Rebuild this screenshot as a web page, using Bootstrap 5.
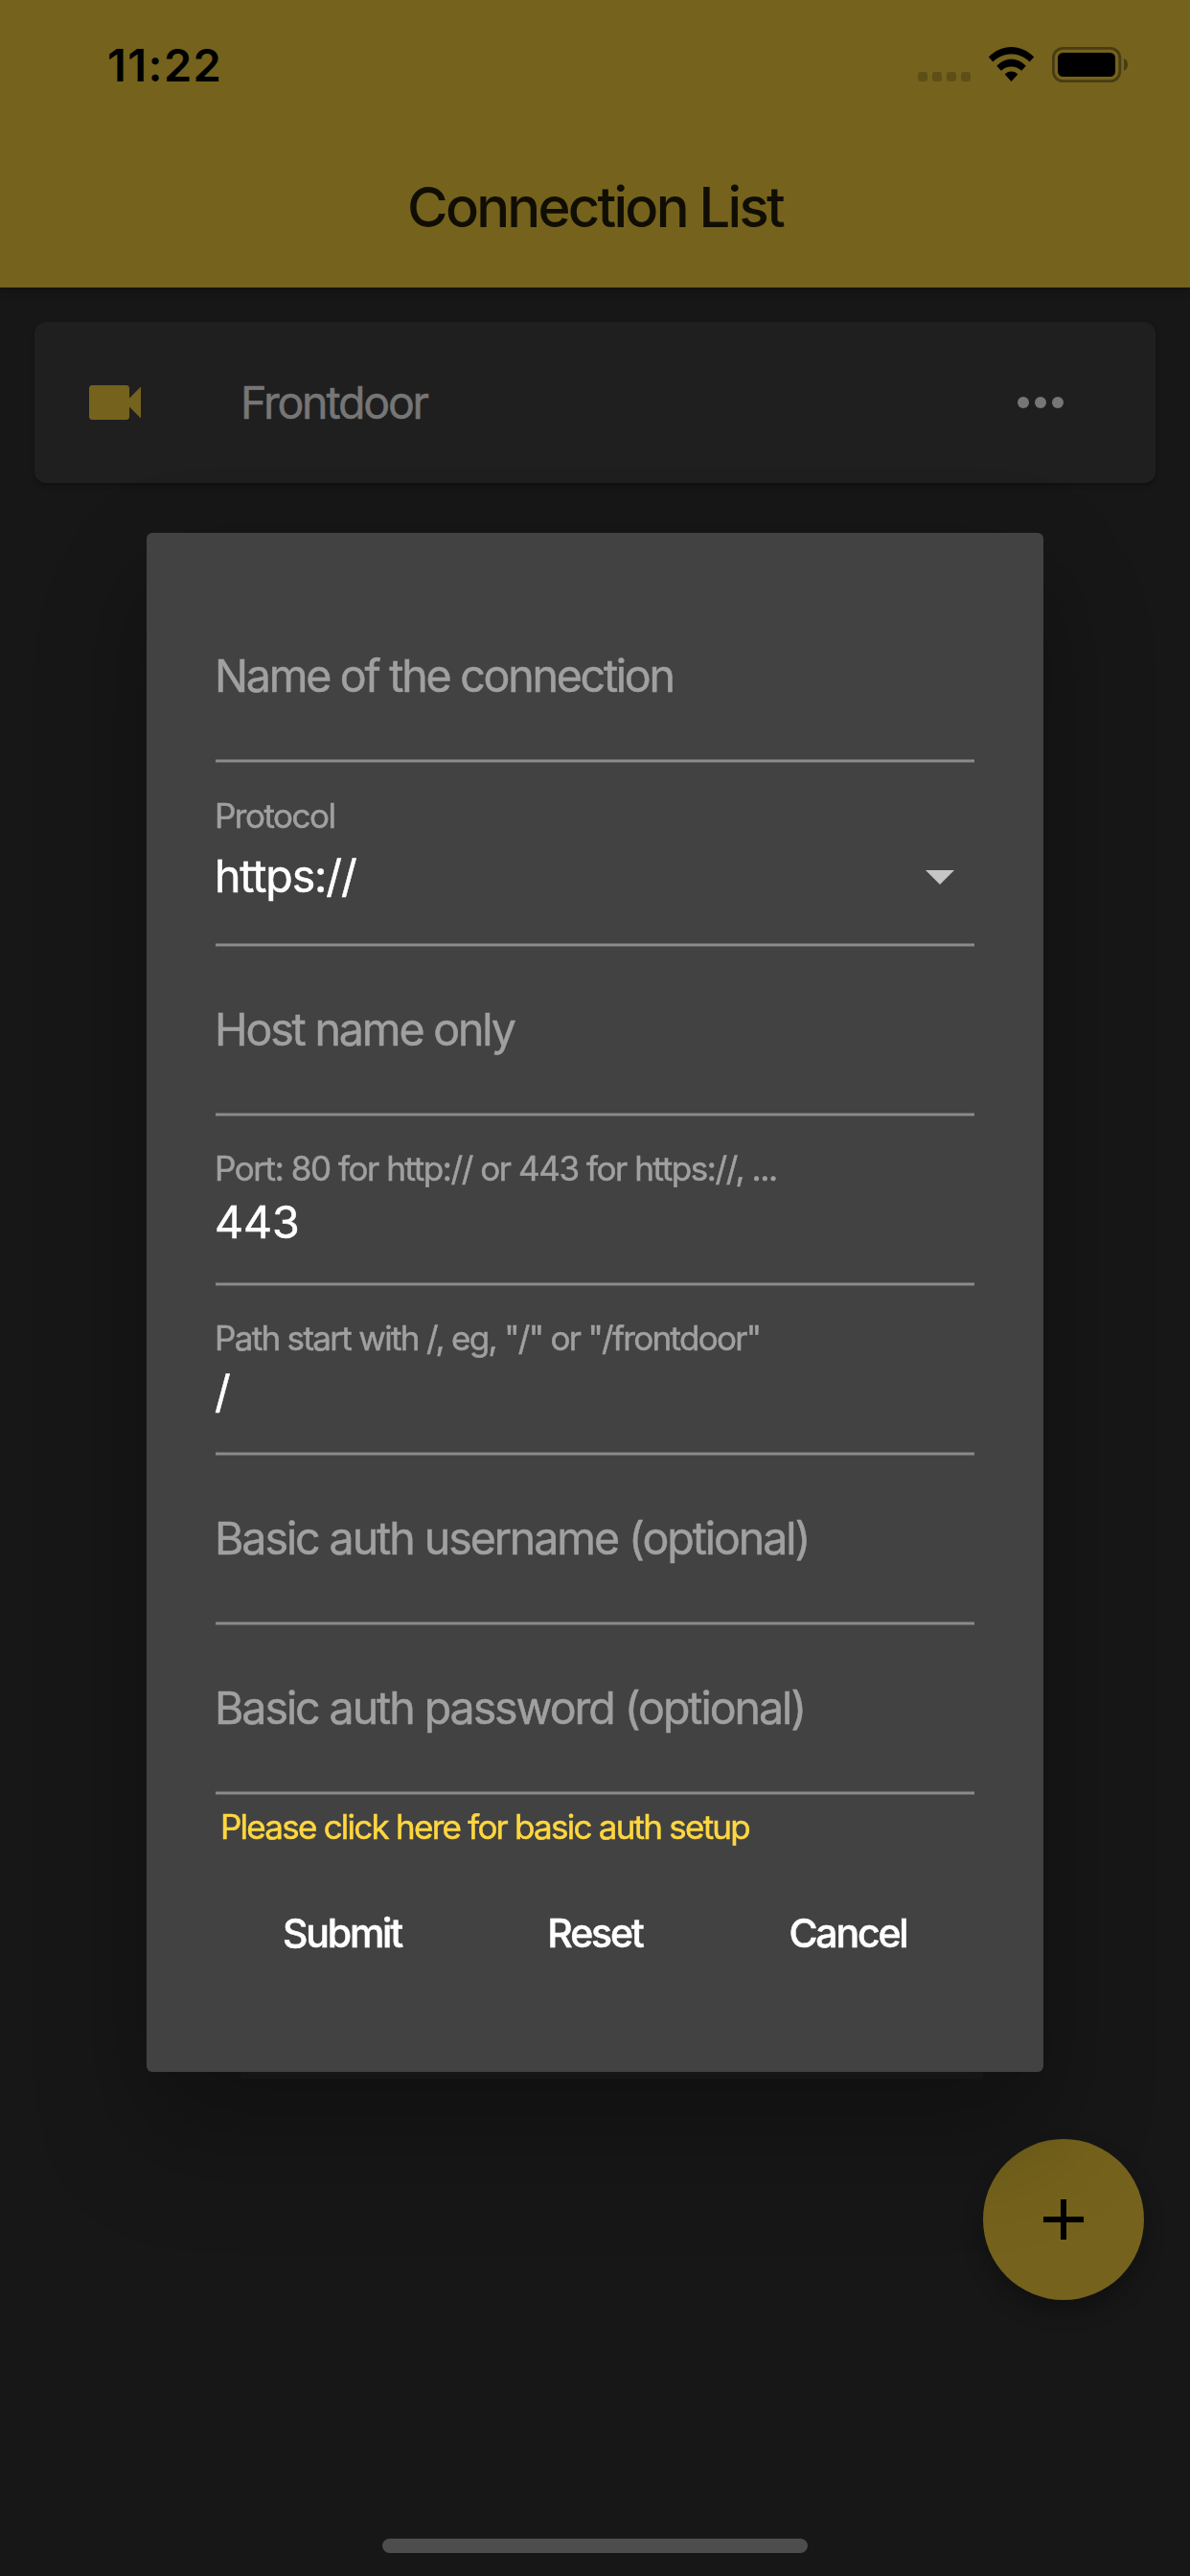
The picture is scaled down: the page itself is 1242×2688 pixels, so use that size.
<!DOCTYPE html>
<html lang="en">
<head>
    <meta charset="UTF-8">
    <meta name="viewport" content="width=device-width, initial-scale=1.0">
    <title>Connection List</title>
    <!-- Bootstrap CSS -->
    <link href="https://cdn.jsdelivr.net/npm/bootstrap@5.3.0/dist/css/bootstrap.min.css" rel="stylesheet">
    <style>
        body {
            background: #171717;
            color: #fff;
            font-family: Inter, "Liberation Sans", sans-serif;
            height: 2688px;
            overflow: hidden;
        }
        svg {
            display: block;
            flex: none;
        }

        /* App bar */
        .app-bar {
            background: #75621c;
            height: 300px;
            box-shadow: 0 3px 10px rgba(0, 0, 0, 0.25);
        }
        .status-bar {
            height: 132px;
            padding: 3px 65px 0 112px;
            color: #000;
        }
        .clock {
            font-size: 47px;
            font-weight: 600;
            line-height: 60px;
            letter-spacing: 1.4px;
        }
        .app-title {
            height: 168px;
            color: #100e04;
            font-size: 58px;
            font-weight: 500;
            letter-spacing: -2.75px;
        }

        /* Connection list */
        .connection {
            height: 168px;
            margin: 36px 36px 0;
            padding: 0 84px 0 48px;
            background: #1f1f1f;
            border-radius: 12px;
            box-shadow: 0 3px 5px rgba(0, 0, 0, 0.3);
        }
        .connection-name {
            margin-left: 95px;
            padding-top: 2px;
            color: #767676;
            font-size: 46.5px;
            letter-spacing: -2.2px;
            -webkit-text-stroke: 0.5px;
        }

        /* Dialog */
        .dialog-box {
            width: 936px;
            margin: 556px auto 0;
        }
        .dialog-sheet {
            height: 1606px;
            padding: 63px 72px 0;
            background: #424242;
            border-radius: 6px;
            box-shadow: 0 72px 114px 9px rgba(0, 0, 0, 0.18), 0 27px 100px 8px rgba(0, 0, 0, 0.12);
        }
        .dialog-edge {
            width: 775px;
            height: 7px;
            margin-left: 98px;
            background: #161616;
            position: relative;
        }
        .field {
            height: 177px;
            background: linear-gradient(#666 1px, #8b8b8b 1px 3px, #666 3px) bottom / 100% 4px no-repeat;
            white-space: nowrap;
            -webkit-text-stroke: 0.5px;
        }
        .field-select { height: 192px; }
        .field-empty { padding-top: 56px; }
        .field-filled { padding-top: 34px; }
        .field-hint, .field-value {
            font-size: 46.5px;
            line-height: 60px;
        }
        .field-hint {
            margin-left: -1px;
            color: #a0a0a0;
            letter-spacing: -2.06px;
        }
        .field-label {
            margin-left: -1px;
            color: #a0a0a0;
            font-size: 35px;
            line-height: 40px;
            margin-bottom: 6px;
            letter-spacing: -1.5px;
        }
        .field-value { text-indent: -1px; }
        .field-select { padding-top: 35px; }
        .field-select .field-label { margin-bottom: 13px; }
        .field-select .field-value {
            height: 60px;
            letter-spacing: -1.15px;
        }
        .hint-name { letter-spacing: -2.24px; }
        .hint-host { letter-spacing: -2.15px; }
        .label-port { letter-spacing: -1.42px; }
        .label-path { letter-spacing: -1.68px; }
        .auth-link {
            padding: 13px 0 0 5px;
            color: #ffd740;
            font-size: 35px;
            line-height: 40px;
            letter-spacing: -1.76px;
            -webkit-text-stroke: 0.5px;
        }
        .dialog-actions { padding-top: 61px; }
        .dialog-actions .btn {
            padding: 0;
            border: 0;
            color: #fff;
            font-size: 41px;
            font-weight: 500;
            line-height: 60px;
            letter-spacing: -2.2px;
            -webkit-text-stroke: 0.5px;
        }

        /* Floating button and home indicator */
        .fab {
            right: 48px;
            top: 2232px;
            width: 168px;
            height: 168px;
            background: #75621c;
            box-shadow: 0 12px 22px rgba(0, 0, 0, 0.3);
        }
        .home-indicator {
            width: 444px;
            height: 15px;
            margin-bottom: 24px;
            background: #4d4d4d;
        }
    </style>
</head>
<body class="d-flex flex-column">
    <header class="app-bar">
        <div class="status-bar d-flex align-items-center justify-content-between">
            <span class="clock">11:22</span>
            <svg width="220" height="37" viewBox="957 49 220 37">
                <!-- Signal -->
                <g fill="#5e4e17">
                    <rect x="958" y="75" width="10" height="10" rx="3"/>
                    <rect x="973" y="75" width="10" height="10" rx="3"/>
                    <rect x="988" y="75" width="10" height="10" rx="3"/>
                    <rect x="1003" y="75" width="10" height="10" rx="3"/>
                </g>
                <!-- Wi-Fi -->
                <path d="M1031.8 59.6C1045.5 45.6 1065.5 45.6 1079.2 59.6L1074.6 64.4C1063.5 53.8 1047.5 53.8 1036.4 64.4Z"/>
                <path d="M1040.2 68.8C1049 59.3 1062 59.3 1070.8 68.8L1066.2 73.7C1060 68 1051 68 1044.8 73.7Z"/>
                <path d="M1048.7 77.5C1052.5 73.4 1058.5 73.4 1062.3 77.5L1055.5 85Z"/>
                <!-- Battery -->
                <rect x="1099.4" y="50.4" width="69.4" height="34.2" rx="10" fill="none" stroke="#493c12" stroke-width="2.8"/>
                <rect x="1104" y="55" width="60" height="25" rx="5.5"/>
                <path d="M1173 61C1178.4 63.5 1178.4 71.5 1173 74Z" fill="#493c12"/>
            </svg>
        </div>
        <div class="app-title d-flex align-items-center justify-content-center">Connection List</div>
    </header>

    <main class="flex-grow-1">
        <div class="connection d-flex align-items-center">
            <svg width="72" height="72" viewBox="0 0 24 24" fill="#75621c">
                <path d="M17 10.5V7c0-.55-.45-1-1-1H4c-.55 0-1 .45-1 1v10c0 .55.45 1 1 1h12c.55 0 1-.45 1-1v-3.5l4 4v-11l-4 4z"/>
            </svg>
            <span class="connection-name">Frontdoor</span>
            <svg class="ms-auto" width="72" height="72" viewBox="0 0 24 24" fill="#767676">
                <circle cx="6" cy="12" r="2"/>
                <circle cx="12" cy="12" r="2"/>
                <circle cx="18" cy="12" r="2"/>
            </svg>
        </div>
    </main>

    <button class="fab btn rounded-circle border-0 p-0 position-absolute d-flex align-items-center justify-content-center" type="button" aria-label="Add">
        <svg width="72" height="72" viewBox="0 0 24 24" fill="#000">
            <path d="M19 13h-6v6h-2v-6H5v-2h6V5h2v6h6v2z"/>
        </svg>
    </button>

    <div class="home-indicator rounded-pill mx-auto"></div>

    <!-- Connection form -->
    <div class="modal d-block" tabindex="-1">
        <div class="dialog-box">
            <form class="dialog-sheet">
                <div class="field field-empty">
                    <div class="field-hint hint-name">Name of the connection</div>
                </div>
                <div class="field field-select">
                    <div class="field-label">Protocol</div>
                    <div class="field-value d-flex align-items-center justify-content-between">
                        <span>https://</span>
                        <svg width="72" height="72" viewBox="0 0 24 24" fill="#c6c6c6">
                            <path d="M7 10l5 5 5-5z"/>
                        </svg>
                    </div>
                </div>
                <div class="field field-empty">
                    <div class="field-hint hint-host">Host name only</div>
                </div>
                <div class="field field-filled">
                    <div class="field-label label-port">Port: 80 for http:// or 443 for https://, ...</div>
                    <div class="field-value">443</div>
                </div>
                <div class="field field-filled">
                    <div class="field-label label-path">Path start with /, eg, "/" or "/frontdoor"</div>
                    <div class="field-value">/</div>
                </div>
                <div class="field field-empty">
                    <div class="field-hint">Basic auth username (optional)</div>
                </div>
                <div class="field field-empty">
                    <div class="field-hint">Basic auth password (optional)</div>
                </div>
                <div class="auth-link">Please click here for basic auth setup</div>
                <div class="dialog-actions row g-0 text-center">
                    <div class="col-4"><button class="btn" type="button">Submit</button></div>
                    <div class="col-4"><button class="btn" type="button">Reset</button></div>
                    <div class="col-4"><button class="btn" type="button">Cancel</button></div>
                </div>
            </form>
            <div class="dialog-edge"></div>
        </div>
    </div>

    <script src="https://cdn.jsdelivr.net/npm/bootstrap@5.3.0/dist/js/bootstrap.bundle.min.js"></script>
</body>
</html>
